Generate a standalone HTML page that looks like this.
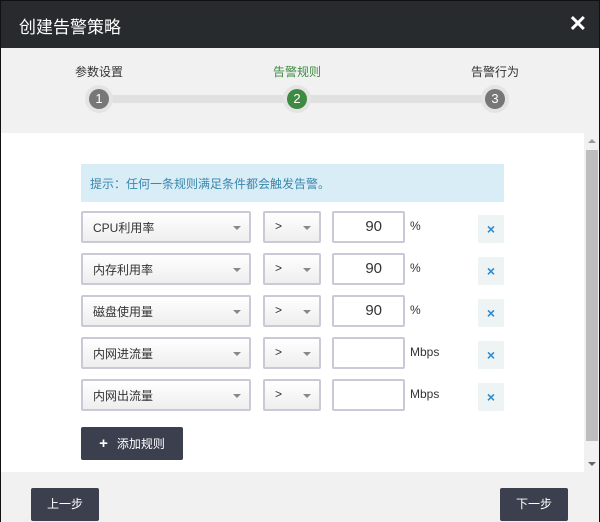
<!DOCTYPE html><html><head><style>
*{margin:0;padding:0;box-sizing:border-box}
html,body{width:600px;height:522px;overflow:hidden}
body{font-family:"Liberation Sans","Noto Sans CJK SC",sans-serif;background:#f1f1f1;position:relative}
.bd{position:absolute;left:0;top:0;width:600px;height:522px;border:1px solid #111;border-bottom:none;z-index:9;pointer-events:none}
.hd{position:absolute;left:0;top:0;width:600px;height:48px;background:#272b2d;color:#fff;font-size:17px;padding:13px 0 0 19px}
.x{position:absolute;right:13px;top:11px;font-size:22px;font-weight:bold;color:#fff}
.line{position:absolute;left:100px;top:95px;width:400px;height:8px;background:#e0e0e0}
.st{position:absolute;top:63px;font-size:12px;color:#333;width:80px;text-align:center}
.c{position:absolute;top:85px;width:28px;height:28px;border-radius:50%;background:#e4e4e4}
.c span{position:absolute;left:4px;top:4px;width:20px;height:20px;border-radius:50%;background:#777;color:#fff;font-size:13px;text-align:center;line-height:20px}
.main{position:absolute;left:0;top:133px;width:584px;height:339px;background:#fff}
.sb{position:absolute;left:584px;top:133px;width:15px;height:339px;background:#f1f1f1}
.th{position:absolute;left:2px;top:17px;width:12px;height:291px;background:#bdbdbd}
.tip{position:absolute;left:81px;top:164px;width:423px;height:38px;background:#d9edf7;color:#3a87ad;font-size:12px;padding:11px 0 0 9px}
.sel,.op,.in{position:absolute;height:32px;border:2px solid #ccc8d8;border-radius:2px;background:linear-gradient(#fff,#eee);font-size:12px;color:#333}
.sel{left:81px;width:170px;padding:6px 0 0 10px}
.op{left:263px;width:58px;padding:6px 0 0 10px}
.in{left:332px;width:73px;background:#fff;font-size:15px;text-align:right;padding:5px 21px 0 0}
.ar{position:absolute;top:13px;width:0;height:0;border-left:4px solid transparent;border-right:4px solid transparent;border-top:4px solid #888}
.u{position:absolute;left:410px;font-size:12px;color:#333}
.d{position:absolute;left:478px;width:26px;height:28px;background:#eef3f3;color:#2a8bd0;font-weight:bold;font-size:14px;text-align:center;line-height:28px;border-radius:2px}
.btn{position:absolute;background:#3c3f4e;color:#fff;font-size:12px;border-radius:2px;text-align:center}
</style></head><body>
<div class="bd"></div>
<div class="hd">创建告警策略<span class="x">✕</span></div>
<div class="line"></div>
<div class="st" style="left:59px">参数设置</div><div class="st" style="left:257px;color:#3f8a43">告警规则</div><div class="st" style="left:455px">告警行为</div>
<div class="c" style="left:85px"><span>1</span></div>
<div class="c" style="left:283px"><span style="background:#3f8a43">2</span></div>
<div class="c" style="left:481px"><span>3</span></div>
<div class="main"></div>
<div class="sb"><div style="position:absolute;left:4px;top:6px;border-left:4px solid transparent;border-right:4px solid transparent;border-bottom:4px solid #999"></div><div class="th"></div><div style="position:absolute;left:4px;top:329px;border-left:4px solid transparent;border-right:4px solid transparent;border-top:4px solid #666"></div></div>
<div class="tip">提示：任何一条规则满足条件都会触发告警。</div>

<div class="sel" style="top:211px">CPU利用率<i class="ar" style="left:150px"></i></div><div class="op" style="top:211px">&gt;<i class="ar" style="left:38px"></i></div><div class="in" style="top:211px">90</div><div class="u" style="top:219px">%</div><div class="d" style="top:215px">×</div>
<div class="sel" style="top:253px">内存利用率<i class="ar" style="left:150px"></i></div><div class="op" style="top:253px">&gt;<i class="ar" style="left:38px"></i></div><div class="in" style="top:253px">90</div><div class="u" style="top:261px">%</div><div class="d" style="top:257px">×</div>
<div class="sel" style="top:295px">磁盘使用量<i class="ar" style="left:150px"></i></div><div class="op" style="top:295px">&gt;<i class="ar" style="left:38px"></i></div><div class="in" style="top:295px">90</div><div class="u" style="top:303px">%</div><div class="d" style="top:299px">×</div>
<div class="sel" style="top:337px">内网进流量<i class="ar" style="left:150px"></i></div><div class="op" style="top:337px">&gt;<i class="ar" style="left:38px"></i></div><div class="in" style="top:337px"></div><div class="u" style="top:345px">Mbps</div><div class="d" style="top:341px">×</div>
<div class="sel" style="top:379px">内网出流量<i class="ar" style="left:150px"></i></div><div class="op" style="top:379px">&gt;<i class="ar" style="left:38px"></i></div><div class="in" style="top:379px"></div><div class="u" style="top:387px">Mbps</div><div class="d" style="top:383px">×</div>

<div class="btn" style="left:81px;top:427px;width:102px;height:33px;line-height:33px"><b style="font-size:15px;margin-right:9px">+</b>添加规则</div>
<div class="btn" style="left:31px;top:488px;width:68px;height:33px;line-height:33px">上一步</div>
<div class="btn" style="left:500px;top:488px;width:68px;height:33px;line-height:33px">下一步</div>
</body></html>
